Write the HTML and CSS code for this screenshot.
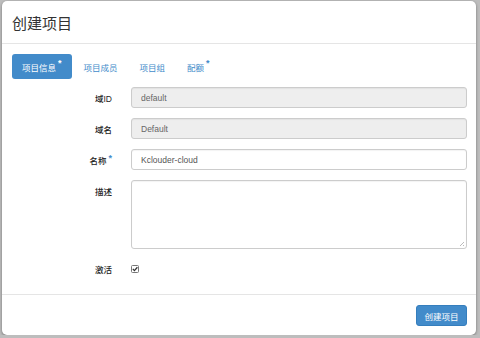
FILE: index.html
```html
<!DOCTYPE html>
<html>
    <head>
        <meta charset="utf-8">
        <link rel="stylesheet" href="styles.css">
        <title>创建项目</title>
    </head>

    <body>
        <div class="modal">
            <div class="modal-header">
                <h3 class="modal-title">创建项目</h3>
            </div>

            <div class="modal-body">
                <ul class="nav-tabs">
                    <li class="tab active">项目信息<span class="req">*</span></li>
                    <li class="tab">项目成员</li>
                    <li class="tab">项目组</li>
                    <li class="tab">配额<span class="req">*</span></li>
                </ul>

                <div class="form-grid">
                    <label class="form-label">域ID</label>
                    <input class="form-input" type="text" value="default" disabled>

                    <label class="form-label">域名</label>
                    <input class="form-input" type="text" value="Default" disabled>

                    <label class="form-label">名称<span class="req">*</span></label>
                    <input class="form-input" type="text" value="Kclouder-cloud">

                    <label class="form-label label-top">描述</label>
                    <div class="textarea-wrap">
                        <textarea class="form-input form-textarea"></textarea>
                        <span class="grip"></span>
                    </div>

                    <label class="form-label">激活</label>
                    <div class="check-cell">
                        <svg class="check-box" width="8" height="8" viewBox="0 0 8 8">
                            <rect x="0.5" y="0.5" width="7" height="7" rx="1" fill="#fff" stroke="#777"/>
                            <path d="M1.8 3.9 L3.4 5.6 L6.4 2.2" fill="none" stroke="#333" stroke-width="1.3"/>
                        </svg>
                    </div>
                </div>
            </div>

            <div class="modal-footer">
                <button class="btn-primary">创建项目</button>
            </div>
        </div>
    </body>
</html>
```

FILE: styles.css
```css
body {
    margin: 0;
    background-color: #bdbdbd;
    font-family: "Liberation Sans", "Noto Sans CJK SC", sans-serif;
    font-size: 8.5px;
    color: #333;
}

.modal {
    margin: 1px 0 0 2px;
    width: 474px;
    height: 334px;
    background: #fff;
    border-radius: 5px;
    box-shadow: 0 1px 3px rgba(0, 0, 0, 0.4);
    display: flex;
    flex-direction: column;
}

.modal-header {
    height: 42px;
    border-bottom: 1px solid #e5e5e5;
    padding: 0 10px;
    display: flex;
    align-items: center;
}

.modal-title {
    margin: 0;
    font-size: 15px;
    font-weight: normal;
    color: #333;
}

.modal-body {
    flex: 1;
    padding: 10px 9px 0 10px;
}

.nav-tabs {
    list-style: none;
    margin: 0 0 8px 0;
    padding: 0;
    display: flex;
    gap: 2px;
}

.tab {
    height: 25px;
    padding: 0 10px;
    border-radius: 3px;
    display: flex;
    align-items: center;
    color: #428bca;
}

.tab.active {
    background-color: #428bca;
    color: #fff;
}

.req {
    position: relative;
    top: -3px;
    margin-left: 2px;
    font-size: 9px;
    font-weight: bold;
    line-height: 1;
    color: #428bca;
}

.tab.active .req {
    color: #fff;
}

.form-grid {
    display: grid;
    grid-template-columns: 100px 336px;
    column-gap: 19px;
    row-gap: 10px;
}

.form-label {
    text-align: right;
    font-weight: 500;
    align-self: center;
    color: #222;
}

.label-top {
    align-self: start;
    padding-top: 5px;
}

.form-input {
    box-sizing: border-box;
    height: 21px;
    margin: 0;
    padding: 0 9px;
    border: 1px solid #ccc;
    border-radius: 3px;
    font-family: "Liberation Sans", "Noto Sans CJK SC", sans-serif;
    font-size: 8.5px;
    color: #555;
    background: #fff;
    box-shadow: inset 0 1px 1px rgba(0, 0, 0, 0.05);
}

.form-input:disabled {
    background-color: #eee;
    color: #666;
    -webkit-text-fill-color: #666;
}

.textarea-wrap {
    position: relative;
    height: 69px;
}

.form-textarea {
    display: block;
    width: 100%;
    height: 69px;
    resize: none;
}

.grip {
    position: absolute;
    right: 3px;
    bottom: 3px;
    width: 5px;
    height: 5px;
    background: linear-gradient(135deg, transparent 55%, #bbb 55%, #bbb 65%, transparent 65%, transparent 80%, #bbb 80%);
}

.check-cell {
    height: 18px;
    display: flex;
    align-items: center;
    margin-top: 1px;
}

.check-box {
    display: block;
}

.modal-footer {
    border-top: 1px solid #e5e5e5;
    padding: 10px 9px 9px 10px;
    display: flex;
    justify-content: flex-end;
}

.btn-primary {
    height: 21px;
    width: 51px;
    padding: 0;
    border: 1px solid #357ebd;
    border-radius: 3px;
    background-color: #428bca;
    color: #fff;
    font-family: "Liberation Sans", "Noto Sans CJK SC", sans-serif;
    font-size: 8.5px;
}
```
